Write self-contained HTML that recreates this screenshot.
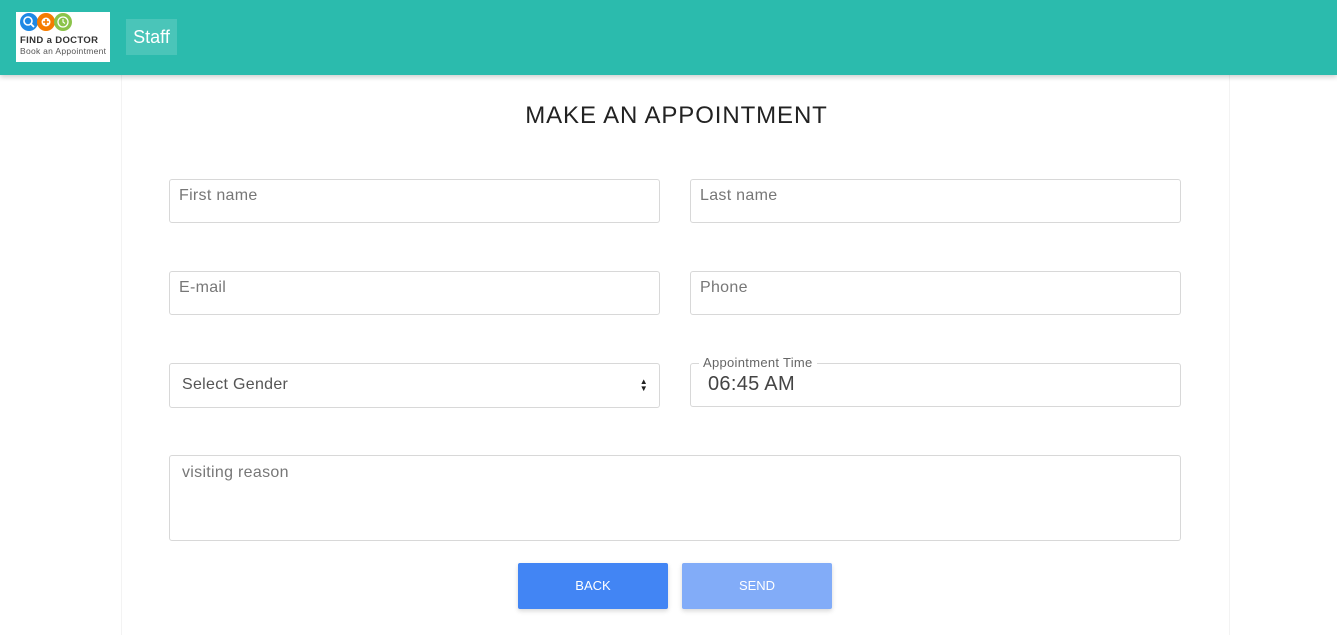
<!DOCTYPE html>
<html><head><style>
*{box-sizing:border-box;margin:0;padding:0}
body{width:1337px;height:622px;overflow:hidden;background:#fff;font-family:"Liberation Sans",sans-serif;position:relative}
.nav{position:absolute;left:0;top:0;width:1337px;height:75px;background:#2bbbad;box-shadow:0 2px 5px rgba(0,0,0,.2);z-index:2}
.logo{position:absolute;left:16px;top:12px;width:94px;height:50px;background:#fff}
.staff{position:absolute;left:126px;top:19px;width:51px;height:36px;background:rgba(255,255,255,.15);color:#fff;font-size:18px;line-height:36px;text-align:center}
.card{position:absolute;left:121px;top:75px;width:1109px;height:560px;border-left:1px solid #f3f3f3;border-right:1px solid #f3f3f3}
h1{position:absolute;top:102px;left:8px;width:1337px;text-align:center;font-weight:400;font-size:24px;color:#222;letter-spacing:0.9px}
.f{position:absolute;border:1px solid #d8d8d8;border-radius:3px;color:#777;font-size:16px;padding:7px 9px;background:#fff;letter-spacing:.3px}
.btn{position:absolute;top:563px;width:150px;height:46px;color:#fff;font-size:13px;text-align:center;line-height:46px;border-radius:2px;box-shadow:0 2px 5px rgba(0,0,0,.16)}
</style></head><body>
<div class="nav">
<div class="logo">
<svg width="94" height="50">
<circle cx="13" cy="10" r="9" fill="#1e88e5"/><circle cx="30" cy="10" r="9" fill="#f57c00"/><circle cx="47" cy="10" r="9" fill="#8bc34a"/>
<circle cx="12" cy="9" r="4" fill="none" stroke="#fff" stroke-width="1.6"/><path d="M15 12l3 3" stroke="#fff" stroke-width="1.8"/>
<circle cx="30" cy="10" r="4.5" fill="#fff"/><path d="M30 7v6M27 10h6" stroke="#f57c00" stroke-width="1.6"/>
<circle cx="47" cy="10" r="5" fill="none" stroke="#fff" stroke-width="1.3"/><path d="M47 7v3l2 1.5" stroke="#fff" stroke-width="1.1" fill="none"/>
<text x="4" y="31" font-size="9.5" font-weight="bold" fill="#333" font-family="Liberation Sans" textLength="78">FIND a DOCTOR</text>
<text x="4" y="42" font-size="8.5" fill="#555" font-family="Liberation Sans" textLength="86">Book an Appointment</text>
</svg></div>
<div class="staff">Staff</div>
</div>
<div class="card"></div>
<h1>MAKE AN APPOINTMENT</h1>
<div class="f" style="left:169px;top:179px;width:491px;height:44px">First name</div>
<div class="f" style="left:690px;top:179px;width:491px;height:44px">Last name</div>
<div class="f" style="left:169px;top:271px;width:491px;height:44px">E-mail</div>
<div class="f" style="left:690px;top:271px;width:491px;height:44px">Phone</div>
<div class="f" style="left:169px;top:363px;width:491px;height:45px;padding:12px 12px;color:#555">Select Gender<span style="position:absolute;right:11px;top:14px;font-size:8px;line-height:7px;color:#222">▲<br>▼</span></div>
<div class="f" style="left:690px;top:363px;width:491px;height:44px;padding:9px 17px;font-size:20px;color:#444">06:45 AM
<span style="position:absolute;left:8px;top:-9px;background:#fff;padding:0 4px;font-size:13px;color:#666">Appointment Time</span></div>
<div class="f" style="left:169px;top:455px;width:1012px;height:86px;padding:8px 12px">visiting reason</div>
<div class="btn" style="left:518px;background:#4285f4">BACK</div>
<div class="btn" style="left:682px;background:#82acf8">SEND</div>
</body></html>
